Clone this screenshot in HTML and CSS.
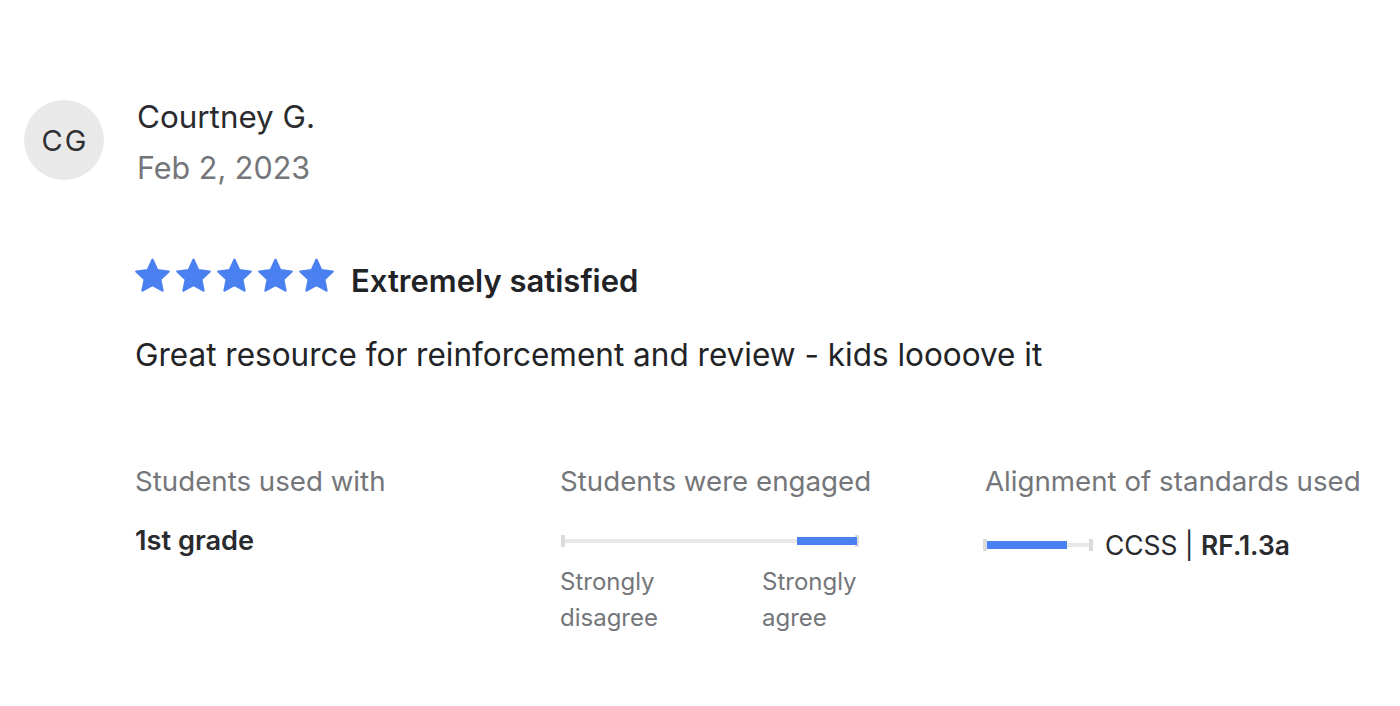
FILE: index.html
```html
<!DOCTYPE html>
<html>
<head>
<meta charset="utf-8">
<link rel="stylesheet" href="styles.css">
</head>
<body>
<div class="review">
  <div class="header">
    <div class="avatar">CG</div>
    <div class="who">
      <div class="name">Courtney G.</div>
      <div class="date">Feb 2, 2023</div>
    </div>
  </div>
  <div class="content">
    <div class="rating">
      <div class="stars">
        <svg viewBox="0 0 24 24"><path d="M12 2.3L14.94 8.76L21.99 9.56L16.76 14.35L18.17 21.29L12 17.8L5.83 21.29L7.24 14.35L2.01 9.56L9.06 8.76Z"/></svg>
        <svg viewBox="0 0 24 24"><path d="M12 2.3L14.94 8.76L21.99 9.56L16.76 14.35L18.17 21.29L12 17.8L5.83 21.29L7.24 14.35L2.01 9.56L9.06 8.76Z"/></svg>
        <svg viewBox="0 0 24 24"><path d="M12 2.3L14.94 8.76L21.99 9.56L16.76 14.35L18.17 21.29L12 17.8L5.83 21.29L7.24 14.35L2.01 9.56L9.06 8.76Z"/></svg>
        <svg viewBox="0 0 24 24"><path d="M12 2.3L14.94 8.76L21.99 9.56L16.76 14.35L18.17 21.29L12 17.8L5.83 21.29L7.24 14.35L2.01 9.56L9.06 8.76Z"/></svg>
        <svg viewBox="0 0 24 24"><path d="M12 2.3L14.94 8.76L21.99 9.56L16.76 14.35L18.17 21.29L12 17.8L5.83 21.29L7.24 14.35L2.01 9.56L9.06 8.76Z"/></svg>
      </div>
      <div class="rating-label">Extremely satisfied</div>
    </div>
    <p class="text">Great resource for reinforcement and review - kids loooove it</p>
    <div class="facts">
      <div class="fact">
        <div class="fact-label">Students used with</div>
        <div class="fact-value">1st grade</div>
      </div>
      <div class="fact">
        <div class="fact-label">Students were engaged</div>
        <div class="bar bar-long">
          <span class="cap"></span>
          <div class="line line-end"><div class="fill" style="width:60px"></div></div>
          <span class="cap"></span>
        </div>
        <div class="scale-labels">
          <span>Strongly<br>disagree</span>
          <span>Strongly<br>agree</span>
        </div>
      </div>
      <div class="fact">
        <div class="fact-label">Alignment of standards used</div>
        <div class="align">
          <div class="bar bar-short">
            <span class="cap"></span>
            <div class="line"><div class="fill" style="width:80px"></div></div>
            <span class="cap"></span>
          </div>
          <div class="std">CCSS | <b>RF.1.3a</b></div>
        </div>
      </div>
    </div>
  </div>
</div>
</body>
</html>
```

FILE: styles.css
```css
html, body {
  margin: 0;
  padding: 0;
  background: #fff;
}
body {
  font-family: Inter, "Noto Sans", "Liberation Sans", sans-serif;
  color: #2a2b2e;
}
.review {
  padding: 100px 0 0 24px;
}
.header {
  display: flex;
  align-items: flex-start;
  gap: 33px;
}
.avatar {
  width: 80px;
  height: 80px;
  border-radius: 50%;
  background: #e9e9e9;
  color: #2e2f33;
  font-size: 29px;
  letter-spacing: 2px;
  padding-left: 2px;
  box-sizing: border-box;
  display: flex;
  align-items: center;
  justify-content: center;
  flex: none;
}
.name {
  font-size: 31.4px;
  line-height: 34px;
  color: #2a2b2e;
}
.date {
  font-size: 30.5px;
  line-height: 34px;
  margin-top: 17px;
  color: #74767a;
}
.content {
  padding-left: 111px;
}
.rating {
  display: flex;
  align-items: center;
  margin-top: 77px;
  gap: 15px;
}
.stars {
  display: flex;
  gap: 2px;
  margin-left: -2px;
  margin-top: -10px;
}
.stars svg {
  width: 39px;
  height: 39px;
  fill: #4a80f0;
  stroke: #4a80f0;
  stroke-width: 1.4;
  stroke-linejoin: round;
}
.rating-label {
  font-size: 31px;
  font-weight: 600;
  color: #222326;
}
.text {
  margin: 38px 0 0;
  font-size: 31.5px;
  line-height: 36px;
  color: #222326;
}
.facts {
  display: flex;
  margin-top: 92px;
}
.fact {
  width: 425px;
  flex: none;
}
.fact-label {
  font-size: 27.7px;
  line-height: 32px;
  color: #74767a;
}
.fact-value {
  margin-top: 28px;
  font-size: 27.2px;
  line-height: 32px;
  font-weight: 600;
  color: #2a2b2e;
}
.bar {
  display: flex;
  align-items: center;
  height: 12px;
}
.bar-long {
  width: 298px;
  margin-top: 38px;
  margin-left: 1px;
}
.bar-short {
  width: 110px;
  margin-left: -2px;
}
.cap {
  width: 4px;
  height: 12px;
  background: #dcdcdc;
  flex: none;
}
.line {
  flex: 1;
  height: 4px;
  background: #e8e8e8;
  display: flex;
  align-items: center;
}
.line-end {
  justify-content: flex-end;
  margin-right: -2px;
  position: relative;
}
.fill {
  height: 8px;
  background: #4a80f0;
  flex: none;
}
.scale-labels {
  display: flex;
  justify-content: space-between;
  width: 298px;
  margin-top: 17px;
  font-size: 24px;
  line-height: 36px;
  color: #74767a;
}
.scale-labels span {
  width: 96px;
}
.align {
  display: flex;
  align-items: center;
  gap: 12px;
  margin-top: 32px;
}
.std {
  font-size: 26.4px;
  line-height: 32px;
  color: #2a2b2e;
}
.std b {
  font-weight: 600;
}
```
